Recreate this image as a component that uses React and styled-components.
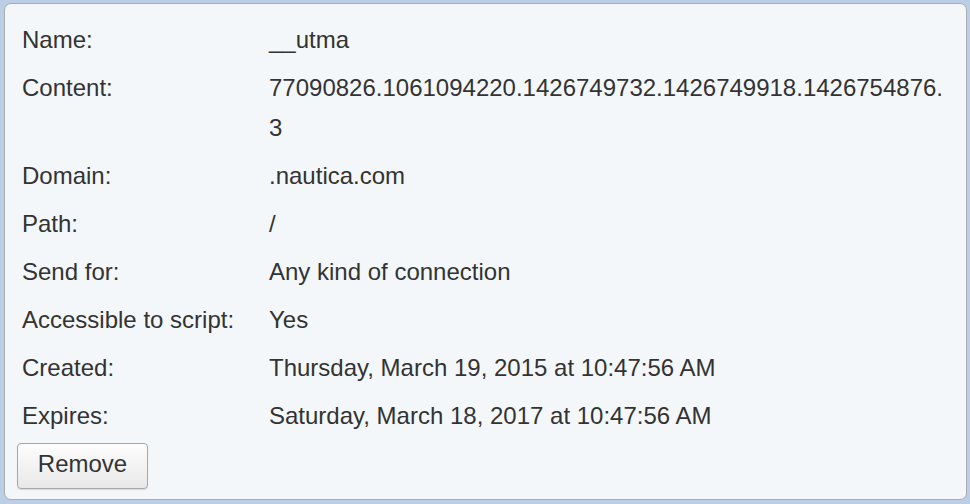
import React from 'react';
import styled, { createGlobalStyle } from 'styled-components';

const GlobalStyle = createGlobalStyle`
    html, body {
        margin: 0;
        padding: 0;
        background: #bccde6;
    }
    body {
        font-family: 'Liberation Sans', Arial, sans-serif;
    }
`

const Page = styled.div`
    width: 970px;
    height: 504px;
    padding: 3px 3px 4px 4px;
    box-sizing: border-box;
`

const Panel = styled.div`
    height: 100%;
    box-sizing: border-box;
    background: #f4f7f9;
    border: 1px solid #a9acb0;
    border-radius: 7px;
    padding: 12px 12px 10px 12px;
    display: flex;
    flex-direction: column;
    align-items: flex-start;
`

const Table = styled.table`
    border-collapse: collapse;
    table-layout: fixed;
    width: 937px;
`

const TD = styled.td`
    font-size: 24px;
    line-height: 40px;
    color: #333333;
    padding: 4px 5px;
    vertical-align: top;
    word-break: break-all;
    &:first-child {
        width: 237px;
        white-space: nowrap;
    }
    &:last-child {
        width: 680px;
    }
`

const Button = styled.button`
    margin-top: 3px;
    width: 131px;
    height: 47px;
    font-family: 'Liberation Sans', Arial, sans-serif;
    font-size: 24px;
    color: #333333;
    background: linear-gradient(#fdfdfd, #e8e8e8);
    border: 1px solid #a8a8a8;
    border-radius: 4px;
    box-shadow: 0 1px 1px rgba(0, 0, 0, 0.12);
    padding: 0 0 4px 0;
`

const rows = [
    ['Name:', '__utma'],
    ['Content:', '77090826.1061094220.1426749732.1426749918.1426754876.3'],
    ['Domain:', '.nautica.com'],
    ['Path:', '/'],
    ['Send for:', 'Any kind of connection'],
    ['Accessible to script:', 'Yes'],
    ['Created:', 'Thursday, March 19, 2015 at 10:47:56 AM'],
    ['Expires:', 'Saturday, March 18, 2017 at 10:47:56 AM'],
]

const App = () => {
    return (
        <>
            <GlobalStyle />
            <Page>
                <Panel>
                    <Table>
                        <tbody>
                            {rows.map(([label, value]) => (
                                <tr key={label}>
                                    <TD>{label}</TD>
                                    <TD>{value}</TD>
                                </tr>
                            ))}
                        </tbody>
                    </Table>
                    <Button>Remove</Button>
                </Panel>
            </Page>
        </>
    )
}

export default App
